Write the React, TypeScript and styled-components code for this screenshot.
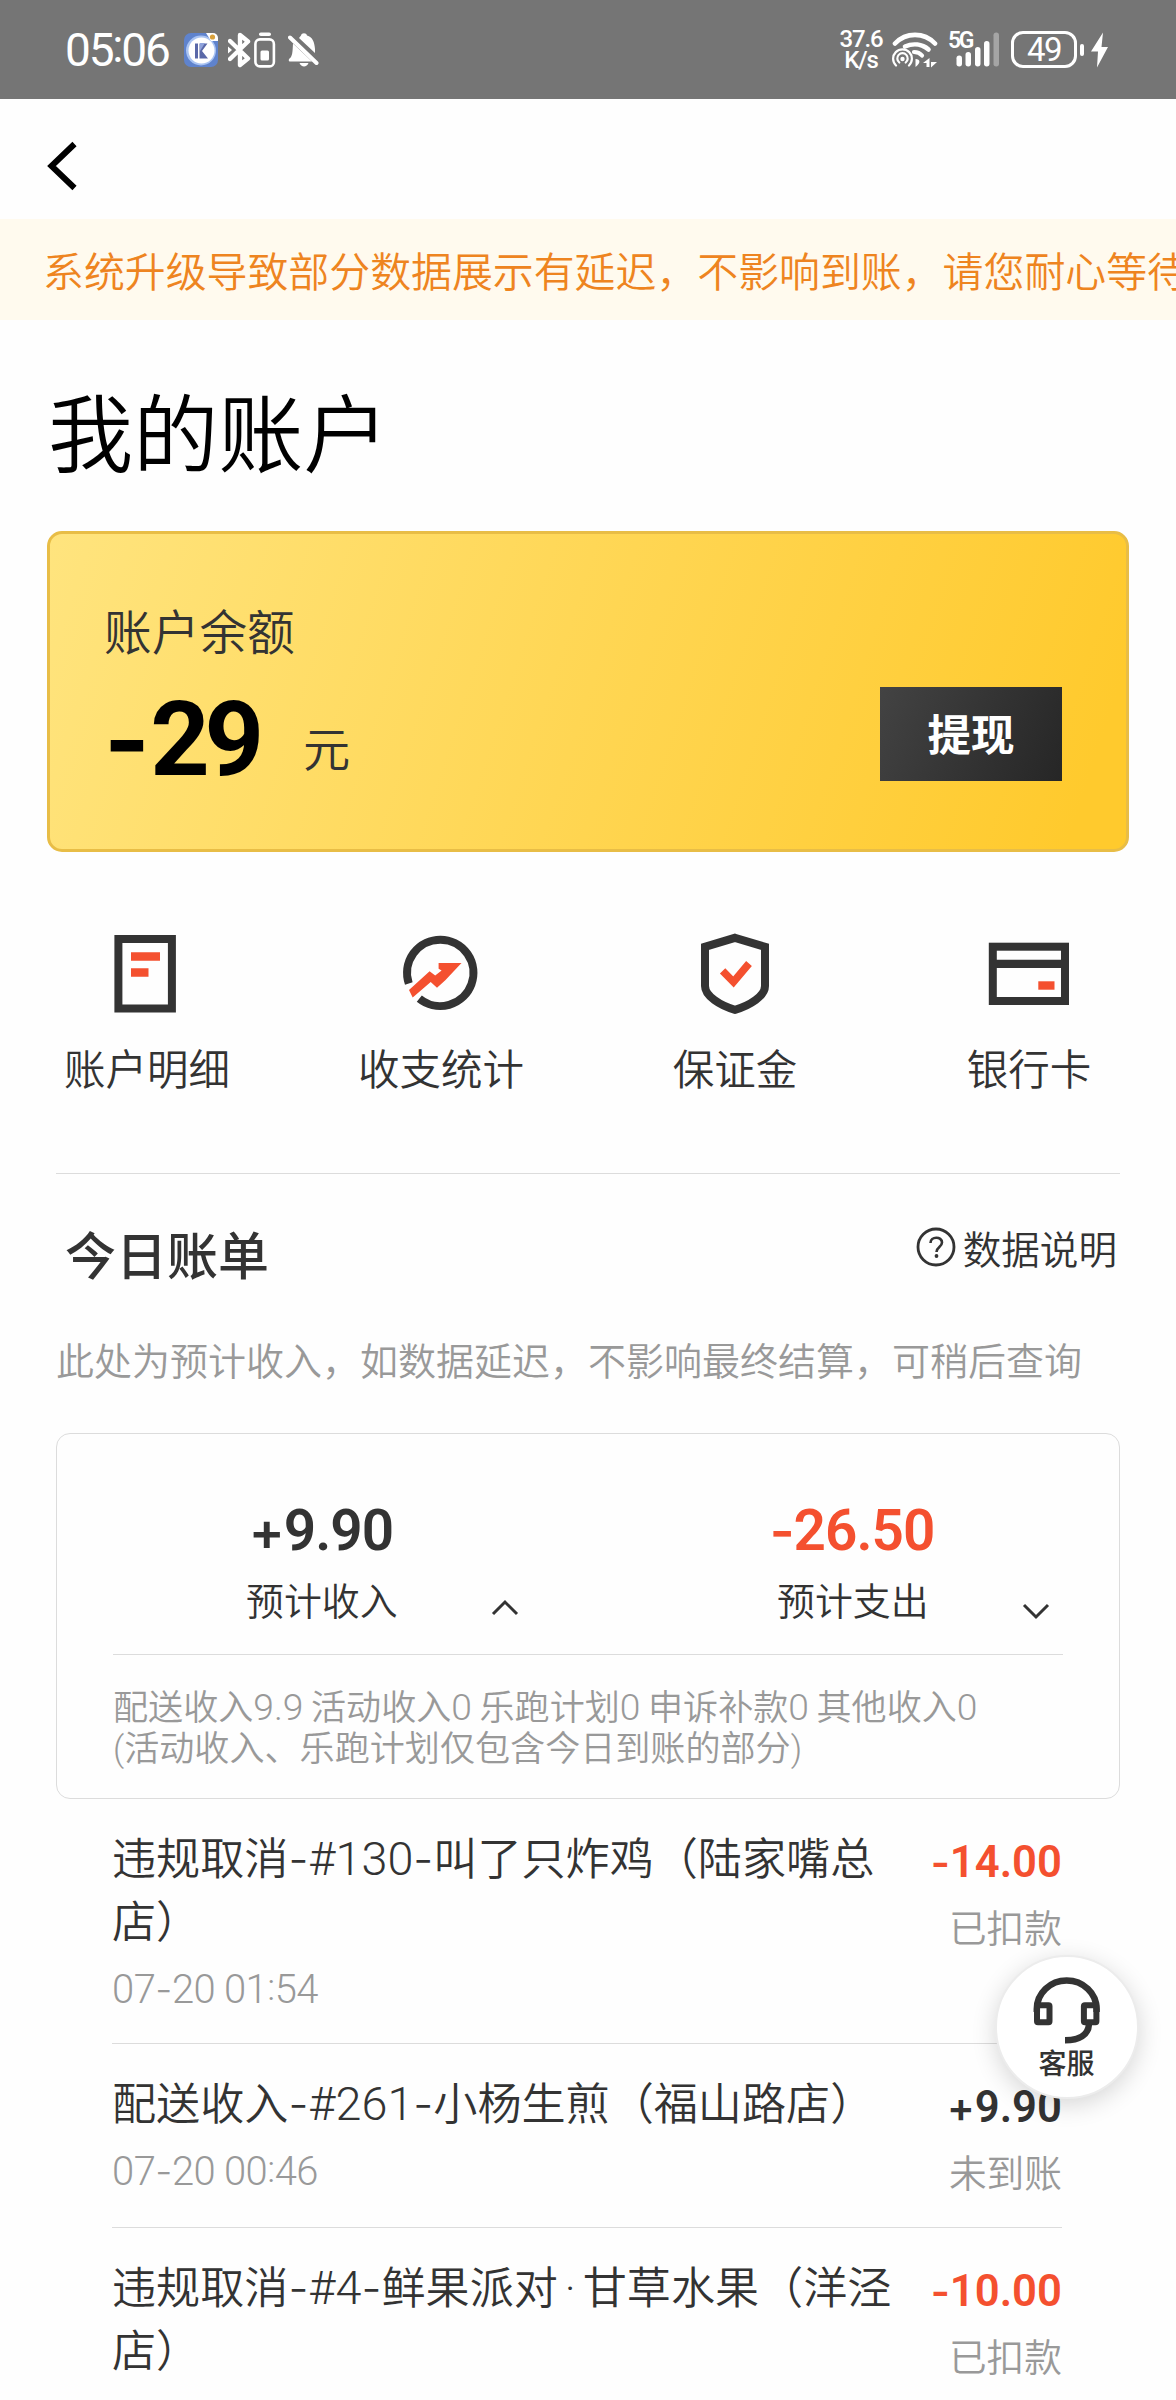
import React from 'react';
import styled, { createGlobalStyle } from 'styled-components';

const INK = '#333333';
const RED = '#f4502f';
const MUTED = '#999999';
const LINE = '#dcdcdc';

const GlobalStyle = createGlobalStyle`
  *, *::before, *::after { box-sizing: border-box; }
  body {
    margin: 0;
    background: #fefefe;
    font-family: Roboto, "Noto Sans CJK SC", sans-serif;
    font-weight: 350;
    color: ${INK};
  }
  svg { display: block; flex: none; }
`;

const Screen = styled.main`
  position: relative;
  width: 1176px;
  height: 2400px;
  overflow: hidden;
  background: #fefefe;
`;

/* ---------- Latin runs inside Chinese text ---------- */

const Latin = styled.span`
  font-size: 1.06em;
  line-height: 0;
`;

const Sign = styled.span`
  font-family: Inter, sans-serif;
  font-size: 1em;
  line-height: 0;
`;

const Colon = styled.span`
  line-height: 0;
  vertical-align: 0.09em;
`;

const MiddleDot = styled.span`
  margin: 0 7px;
`;

function Mixed({ children }: { children: string }) {
  const parts = children.split(/([-+:·]|[0-9#.]+)/).filter(Boolean);
  return (
    <>
      {parts.map((part, i) => {
        if (/^[-+]$/.test(part)) return <Sign key={i}>{part}</Sign>;
        if (part === ':') return <Colon key={i}>{part}</Colon>;
        if (part === '·') return <MiddleDot key={i}>{part}</MiddleDot>;
        if (/^[0-9#.]+$/.test(part)) return <Latin key={i}>{part}</Latin>;
        return <React.Fragment key={i}>{part}</React.Fragment>;
      })}
    </>
  );
}

/* ---------- Status bar ---------- */

const StatusBar = styled.header`
  display: flex;
  align-items: center;
  justify-content: space-between;
  height: 99px;
  padding: 0 68px 0 65px;
  background: #757575;
  color: #fff;
`;

const StatusGroup = styled.div`
  display: flex;
  align-items: center;
`;

const Clock = styled.span`
  width: 119px;
  padding-top: 1px;
  font-size: 46px;
  line-height: 56px;
  font-weight: 400;
  letter-spacing: -2.2px;
`;

const NetSpeed = styled.div`
  width: 46px;
  margin-right: 8px;
  text-align: center;
  font-size: 24px;
  line-height: 21px;
  font-weight: 500;
  letter-spacing: -1.1px;
`;

const Signal = styled.div`
  position: relative;
  width: 51px;
  height: 35px;
  margin: 0 11px 0 11px;
`;

const SignalLabel = styled.span`
  position: absolute;
  left: -1px;
  top: -1px;
  font-size: 23px;
  line-height: 20px;
  font-weight: 600;
  letter-spacing: -2.5px;
`;

const Battery = styled.div`
  display: flex;
  align-items: center;
  justify-content: center;
  width: 66px;
  height: 37px;
  border: 3px solid #fff;
  border-radius: 12px;
  font-size: 33px;
  line-height: 32px;
  font-weight: 400;
  letter-spacing: -1.5px;
`;

const BatteryNub = styled.span`
  width: 4px;
  height: 12px;
  margin: 0 7px 0 3px;
  border-radius: 2px;
  background: #fff;
`;

const Badge = styled.svg`
  margin-right: 10px;
`;

function AppBadge() {
  return (
    <Badge width="34" height="34" viewBox="0 0 34 34">
      <rect width="34" height="34" rx="7" fill="#5f83cd" />
      <circle cx="17" cy="17.5" r="15" fill="#a9c3f2" />
      <circle cx="17.5" cy="17.5" r="13" fill="#fff" />
      <path d="M11 10.500h3v15h-3z" fill="#5a68a8" />
      <path d="M15.500 10.500h8l-5.500 7.500 6 7.500h-8.500z" fill="#5a68a8" />
      <path d="M21 10l-5 8v-8z" fill="#8fa3dc" />
      <path d="M22 0h7a5 5 0 0 1 5 5v3h-7z" fill="#fff" />
      <circle cx="28.500" cy="4" r="2.600" fill="#d9a13c" />
    </Badge>
  );
}

const Bluetooth = styled.svg`
  margin-right: 3px;
`;

function BluetoothIcon() {
  return (
    <Bluetooth width="23" height="36" viewBox="0 0 23 36">
      <path
        d="M2 9l18 17.500-8 6.500V3l8 6.500L2 27"
        fill="none"
        stroke="#fff"
        strokeWidth="4.400"
        strokeLinejoin="round"
        strokeLinecap="round"
      />
      <path d="M0 14.500l4 3.500-4 3.500z" fill="#fff" />
    </Bluetooth>
  );
}

const DeviceBattery = styled.svg`
  margin-right: 12px;
`;

function DeviceBatteryIcon() {
  return (
    <DeviceBattery width="22" height="36" viewBox="0 0 22 36">
      <rect x="5" y="0.500" width="12" height="3.600" rx="1.800" fill="#fff" />
      <rect x="1.400" y="7.400" width="18.500" height="27" rx="4.500" fill="none" stroke="#fff" strokeWidth="2.600" />
      <rect x="6.500" y="18.500" width="8.500" height="10" rx="1.500" fill="#fff" />
    </DeviceBattery>
  );
}

function BellOffIcon() {
  return (
    <svg width="32" height="36" viewBox="0 0 32 36">
      <path
        d="M13 3.500C13.500 0.500 18.500 0.500 19 3.500C24.500 5 26.500 10 27 17V21L11 6Z M5 11.500L24 29.500H1.500C0.500 29.500 0.500 27 1.500 26.500C4.500 24.500 4.500 20 5 11.500Z"
        fill="#fff"
      />
      <path d="M11.500 31h9c-1.500 4.500-7.500 4.500-9 0z" fill="#fff" />
      <path d="M2 5.500L28.500 31" stroke="#fff" strokeWidth="4" strokeLinecap="round" />
    </svg>
  );
}

function WifiIcon() {
  return (
    <svg width="46" height="36" viewBox="0 0 46 36">
      <g fill="none" stroke="#fff" strokeLinecap="round">
        <path d="M3 11.500C14 0 32 0 43 11.500" strokeWidth="4.600" />
        <path d="M13 14.500C21 11 30 12 36.500 17.500" strokeWidth="4.600" />
        <path d="M22 20C25 20 28 21 30 23.500" strokeWidth="4.200" />
        <path d="M4 33.500a9.400 9.400 0 1 1 13 0" strokeWidth="2.200" />
        <path d="M7.300 30.500a5.200 5.200 0 1 1 6.400 0" strokeWidth="2.200" />
      </g>
      <circle cx="10.500" cy="27" r="2.200" fill="#fff" />
      <path d="M23.500 27c5 0 5.500 4 0 8z M31 31l6.500-5v9h-3v-4z M39 26v4h6l-6 5.500z" fill="#fff" />
    </svg>
  );
}

function SignalBars() {
  return (
    <svg width="51" height="35" viewBox="0 0 51 35">
      <g fill="#fff">
        <rect x="7.500" y="23.500" width="5.500" height="11" rx="2.700" />
        <rect x="16.500" y="20" width="5.500" height="14.500" rx="2.700" />
        <rect x="26" y="15" width="5.500" height="19.500" rx="2.700" />
        <rect x="35" y="9" width="5.500" height="25.500" rx="2.700" />
        <rect x="44.500" y="0.500" width="5.500" height="34" rx="2.700" opacity="0.350" />
      </g>
    </svg>
  );
}

function BoltIcon() {
  return (
    <svg width="17" height="36" viewBox="0 0 17 36">
      <path d="M12 0.500L0 19.500h7L6 35.500L17 15h-6.500z" fill="#fff" />
    </svg>
  );
}

/* ---------- Top of page ---------- */

const NavBar = styled.nav`
  display: flex;
  align-items: center;
  height: 120px;
  padding: 14px 0 0 46px;
`;

const Notice = styled.div`
  height: 101px;
  padding-left: 43px;
  overflow: hidden;
  white-space: nowrap;
  background: #fffaee;
  color: #ee8420;
  font-size: 40.900px;
  line-height: 108px;
`;

const PageTitle = styled.h1`
  margin: 0;
  padding: 65px 0 0 48px;
  height: 211px;
  font-size: 85.200px;
  line-height: 104px;
  font-weight: 350;
  color: #000;
`;

const BalanceCard = styled.section`
  display: flex;
  justify-content: space-between;
  width: 1082px;
  height: 321px;
  margin: 0 47px;
  padding: 70px 64px 0 54px;
  border: 3px solid #e8bd46;
  border-radius: 15px;
  background: linear-gradient(108deg, #ffe47e 0%, #ffd653 50%, #ffca2d 95%);
`;

const BalanceLabel = styled.div`
  font-size: 47.700px;
  line-height: 60px;
`;

const BalanceRow = styled.div`
  display: flex;
  align-items: flex-start;
  margin-top: 23px;
`;

const BalanceValue = styled.span`
  width: 199px;
  color: #000;
  font-size: 98px;
  line-height: 110px;
  font-weight: 700;
  letter-spacing: -5.500px;

  ${Sign} {
    margin-right: 6px;
  }
`;

const BalanceUnit = styled.span`
  font-size: 47.200px;
  line-height: 128px;
`;

const WithdrawButton = styled.button`
  width: 182px;
  height: 94px;
  margin: 83px 0 0;
  padding: 6px 0 0;
  border: 0;
  background: linear-gradient(115deg, #434343, #262626);
  color: #fff;
  font: 700 43.5px/88px Roboto, "Noto Sans CJK SC", sans-serif;
`;

/* ---------- Shortcuts ---------- */

const Shortcuts = styled.section`
  display: grid;
  grid-template-columns: repeat(4, 1fr);
  height: 321px;
  padding-top: 74px;
`;

const Shortcut = styled.div`
  display: flex;
  flex-direction: column;
  align-items: center;
  gap: 21px;
  font-size: 41.500px;
  line-height: 60px;
`;

function StatementIcon() {
  return (
    <svg width="94" height="94" viewBox="0 0 94 94">
      <rect x="18.400" y="13" width="53.500" height="69.500" fill="none" stroke={INK} strokeWidth="8" />
      <path d="M31 26.300h29v8.400H31zM31 42.300h17.500v8.400H31z" fill={RED} />
    </svg>
  );
}

function StatsIcon() {
  return (
    <svg width="94" height="94" viewBox="-1 -1 94 94">
      <path d="M13.800 56.500A33.200 33.200 0 1 1 24.300 71.600" fill="none" stroke={INK} strokeWidth="8" />
      <path
        d="M14 63L34.600 44.300L40.200 48.500L46.600 43.500L43.600 41.700V36H66.500L50.300 53.300L42 60.700L35.700 55L17.700 70.500Z"
        fill={RED}
      />
    </svg>
  );
}

function DepositIcon() {
  return (
    <svg width="94" height="94" viewBox="0 0 94 94">
      <path
        d="M47 11.800L77 20.800V60C77 70 62 79.500 47 83.800C32 79.500 17 70 17 60V20.800Z"
        fill="none"
        stroke={INK}
        strokeWidth="8"
      />
      <path d="M34.600 44.800L45.500 56L61 37.500" fill="none" stroke={RED} strokeWidth="7.500" />
    </svg>
  );
}

function CardIcon() {
  return (
    <svg width="94" height="94" viewBox="0 0 94 94">
      <rect x="10.800" y="20.700" width="72.200" height="54.300" fill="none" stroke={INK} strokeWidth="8" />
      <path d="M10 33.700h74v8.400H10z" fill={INK} />
      <path d="M56.300 55.300h16.200v8.400H56.300z" fill={RED} />
    </svg>
  );
}

/* ---------- Today's bill ---------- */

const Bill = styled.section`
  width: 1064px;
  margin: 0 56px;
  border-top: 1px solid ${LINE};
`;

const BillHeader = styled.div`
  display: flex;
  justify-content: space-between;
  height: 150px;
  padding: 0 3px 0 9px;
`;

const BillTitle = styled.h2`
  margin: 50px 0 0;
  font-size: 51px;
  line-height: 68px;
  font-weight: 500;
`;

const HelpLink = styled.div`
  display: flex;
  align-items: center;
  gap: 7px;
  height: 60px;
  margin-top: 43px;
  font-size: 38.600px;
`;

const BillHint = styled.p`
  height: 109px;
  margin: 0;
  padding-top: 8px;
  color: ${MUTED};
  font-size: 38px;
  line-height: 60px;
  white-space: nowrap;
`;

const Summary = styled.div`
  height: 366px;
  padding: 0 56px;
  border: 1px solid ${LINE};
  border-radius: 14px;
`;

const SummaryColumns = styled.div`
  display: flex;
  height: 221px;
  border-bottom: 1px solid ${LINE};
`;

const SummaryColumn = styled.div<{ $width: number; $left: number }>`
  display: grid;
  grid-template-columns: 152px 1fr;
  grid-template-rows: 52px 38px;
  align-content: start;
  width: ${(p) => p.$width}px;
  padding: 97px 0 0 ${(p) => p.$left}px;
`;

const SummaryValue = styled.div<{ $negative?: boolean }>`
  grid-column: 1 / -1;
  width: 150px;
  display: flex;
  justify-content: center;
  color: ${(p) => (p.$negative ? RED : INK)};
  font-size: 53.500px;
  line-height: 44px;
  font-weight: 600;
  letter-spacing: -1px;
  white-space: nowrap;
`;

const SummaryLabel = styled.div`
  font-size: 37.900px;
  line-height: 38px;
`;

const Chevron = styled.div<{ $drop: number }>`
  display: flex;
  padding: ${(p) => p.$drop}px 0 0 93px;
`;

const SummaryDetail = styled.div`
  padding-top: 33px;
  color: ${MUTED};
  font-size: 35.100px;
  line-height: 41px;
  white-space: nowrap;
  word-spacing: -1px;
`;

/* ---------- Records ---------- */

const Records = styled.ul`
  list-style: none;
  width: 950px;
  margin: 0 0 0 112px;
  padding: 0;
`;

const Record = styled.li`
  display: flex;
  justify-content: space-between;
  padding: 29px 0 25px;
  border-bottom: 1px solid ${LINE};
`;

const RecordMain = styled.div`
  width: 790px;
  padding-top: 1px;
`;

const RecordTitle = styled.div`
  font-size: 44.100px;
  line-height: 63px;
`;

const RecordTime = styled.div`
  margin-top: 8px;
  padding-bottom: 1px;
  color: ${MUTED};
  font-size: 37.700px;
  line-height: 54px;
  letter-spacing: -0.500px;
`;

const RecordSide = styled.div`
  padding: 4px 0 6px;
  text-align: right;
  white-space: nowrap;
`;

const RecordAmount = styled.div<{ $negative?: boolean }>`
  color: ${(p) => (p.$negative ? RED : INK)};
  font-size: 41.200px;
  line-height: 62px;
  font-weight: 600;
`;

const RecordStatus = styled.div`
  margin-top: 13px;
  color: ${MUTED};
  font-size: 37.700px;
  line-height: 44px;
`;

/* ---------- Floating support button ---------- */

const SupportButton = styled.button`
  position: absolute;
  left: 995px;
  top: 1955px;
  display: flex;
  flex-direction: column;
  align-items: center;
  width: 144px;
  height: 144px;
  padding: 19px 1px 0 0;
  border: 2px solid #ececec;
  border-radius: 50%;
  background: #fff;
  box-shadow: 0 6px 24px rgba(0, 0, 0, 0.16);
  color: ${INK};
  font: 500 28px/39px Roboto, "Noto Sans CJK SC", sans-serif;
`;

function HeadsetIcon() {
  return (
    <svg width="70" height="69" viewBox="0 0 70 69">
      <g fill="none" stroke={INK}>
        <path d="M4.800 36V33A29.900 28.500 0 0 1 64.600 33V36" strokeWidth="6.500" />
        <rect x="5" y="29.300" width="12.500" height="17" rx="1" strokeWidth="6" />
        <rect x="51.900" y="29.300" width="12.500" height="17" rx="1" strokeWidth="6" />
        <path d="M57 48C56.500 59 47 64.300 33 64.300" strokeWidth="6.500" />
      </g>
    </svg>
  );
}

const shortcuts = [
  { label: '账户明细', Icon: StatementIcon },
  { label: '收支统计', Icon: StatsIcon },
  { label: '保证金', Icon: DepositIcon },
  { label: '银行卡', Icon: CardIcon },
];

interface BillRecord {
  title: string;
  time?: string;
  amount: string;
  status: string;
}

const records: BillRecord[] = [
  { title: '违规取消-#130-叫了只炸鸡（陆家嘴总店）', time: '07-20 01:54', amount: '-14.00', status: '已扣款' },
  { title: '配送收入-#261-小杨生煎（福山路店）', time: '07-20 00:46', amount: '+9.90', status: '未到账' },
  { title: '违规取消-#4-鲜果派对·甘草水果（洋泾店）', amount: '-10.00', status: '已扣款' },
];

export default function App() {
  return (
    <Screen>
      <GlobalStyle />
      <StatusBar>
        <StatusGroup>
          <Clock>
            05<Colon>:</Colon>06
          </Clock>
          <AppBadge />
          <BluetoothIcon />
          <DeviceBatteryIcon />
          <BellOffIcon />
        </StatusGroup>
        <StatusGroup>
          <NetSpeed>
            37.6
            <br />
            K/s
          </NetSpeed>
          <WifiIcon />
          <Signal>
            <SignalLabel>5G</SignalLabel>
            <SignalBars />
          </Signal>
          <Battery>49</Battery>
          <BatteryNub />
          <BoltIcon />
        </StatusGroup>
      </StatusBar>

      <NavBar>
        <svg width="32" height="50" viewBox="0 0 32 50">
          <path d="M28.500 3L5.500 25L28.500 47" fill="none" stroke="#000" strokeWidth="6" />
        </svg>
      </NavBar>
      <Notice>系统升级导致部分数据展示有延迟，不影响到账，请您耐心等待</Notice>
      <PageTitle>我的账户</PageTitle>

      <BalanceCard>
        <div>
          <BalanceLabel>账户余额</BalanceLabel>
          <BalanceRow>
            <BalanceValue>
              <Mixed>-29</Mixed>
            </BalanceValue>
            <BalanceUnit>元</BalanceUnit>
          </BalanceRow>
        </div>
        <WithdrawButton>提现</WithdrawButton>
      </BalanceCard>

      <Shortcuts>
        {shortcuts.map(({ label, Icon }) => (
          <Shortcut key={label}>
            <Icon />
            {label}
          </Shortcut>
        ))}
      </Shortcuts>

      <Bill>
        <BillHeader>
          <BillTitle>今日账单</BillTitle>
          <HelpLink>
            <svg width="40" height="40" viewBox="0 0 40 40">
              <circle cx="20" cy="20" r="18" fill="none" stroke={INK} strokeWidth="2.800" />
              <path
                d="M14.500 16c0-7 11.500-7 11.500-0.500c0 4.500-5.500 4.500-5.500 9.500"
                fill="none"
                stroke={INK}
                strokeWidth="2.600"
              />
              <circle cx="20.500" cy="29" r="1.900" fill={INK} />
            </svg>
            数据说明
          </HelpLink>
        </BillHeader>
        <BillHint>此处为预计收入，如数据延迟，不影响最终结算，可稍后查询</BillHint>
        <Summary>
          <SummaryColumns>
            <SummaryColumn $width={530} $left={133}>
              <SummaryValue>
                <Mixed>+9.90</Mixed>
              </SummaryValue>
              <SummaryLabel>预计收入</SummaryLabel>
              <Chevron $drop={16}>
                <svg width="28" height="17" viewBox="0 0 28 17">
                  <path d="M2 15L14 3L26 15" fill="none" stroke={INK} strokeWidth="3" />
                </svg>
              </Chevron>
            </SummaryColumn>
            <SummaryColumn $width={420} $left={134}>
              <SummaryValue $negative>
                <Mixed>-26.50</Mixed>
              </SummaryValue>
              <SummaryLabel>预计支出</SummaryLabel>
              <Chevron $drop={20}>
                <svg width="28" height="17" viewBox="0 0 28 17">
                  <path d="M2 2L14 14L26 2" fill="none" stroke={INK} strokeWidth="3" />
                </svg>
              </Chevron>
            </SummaryColumn>
          </SummaryColumns>
          <SummaryDetail>
            <Mixed>配送收入9.9 活动收入0 乐跑计划0 申诉补款0 其他收入0</Mixed>
            <br />
            (活动收入、乐跑计划仅包含今日到账的部分)
          </SummaryDetail>
        </Summary>
      </Bill>

      <Records>
        {records.map((r) => (
          <Record key={r.title}>
            <RecordMain>
              <RecordTitle>
                <Mixed>{r.title}</Mixed>
              </RecordTitle>
              {r.time && (
                <RecordTime>
                  <Mixed>{r.time}</Mixed>
                </RecordTime>
              )}
            </RecordMain>
            <RecordSide>
              <RecordAmount $negative={r.amount.startsWith('-')}>
                <Mixed>{r.amount}</Mixed>
              </RecordAmount>
              <RecordStatus>{r.status}</RecordStatus>
            </RecordSide>
          </Record>
        ))}
      </Records>

      <SupportButton>
        <HeadsetIcon />
        客服
      </SupportButton>
    </Screen>
  );
}
